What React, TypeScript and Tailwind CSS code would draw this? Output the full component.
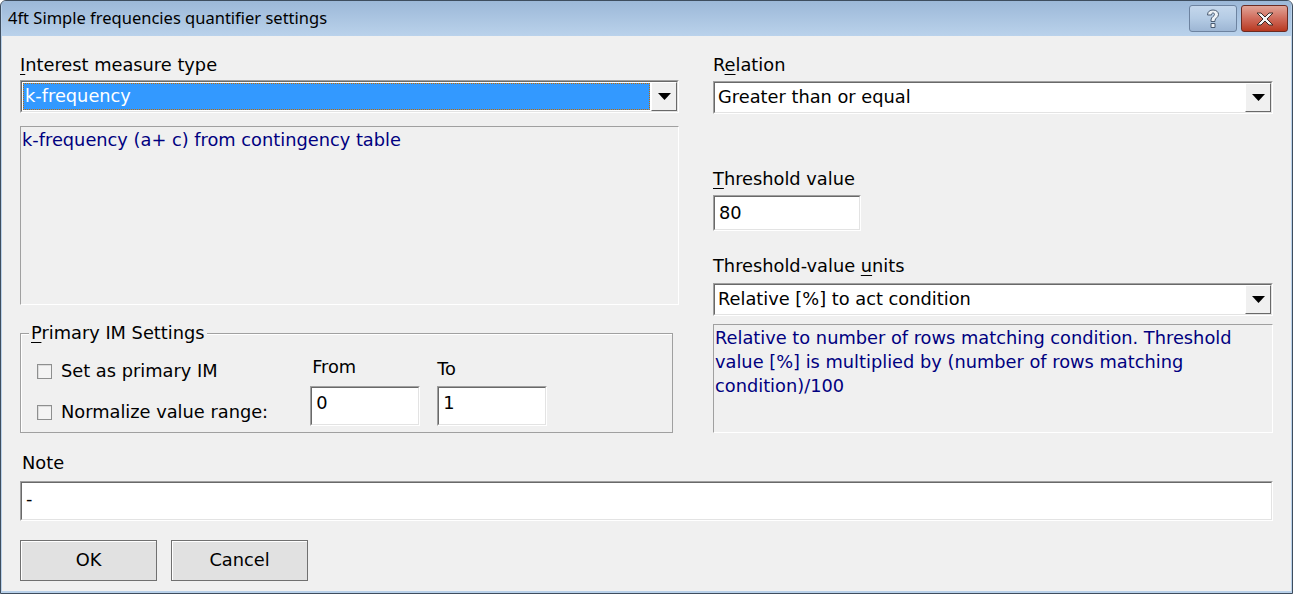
import React from "react";

const ui = { fontFamily: '"DejaVu Sans", Tahoma, sans-serif' };

const DropButton = () => (
  <div className="flex h-full w-[26px] shrink-0 items-center justify-center border border-t-white border-l-white border-b-[#696969] border-r-[#696969] bg-[#f0f0f0]">
    <svg width="13" height="7" viewBox="0 0 13 7">
      <path d="M0 0 H13 L6.5 7 Z" fill="#000" />
    </svg>
  </div>
);

const Sunken = ({ className, children }: { className?: string; children?: React.ReactNode }) => (
  <div className={"border border-t-[#a0a0a0] border-l-[#a0a0a0] border-b-white border-r-white " + (className || "")}>
    <div className="h-full w-full border border-t-[#696969] border-l-[#696969] border-b-[#e3e3e3] border-r-[#e3e3e3] bg-white">
      {children}
    </div>
  </div>
);

const Combo = ({ value, selected }: { value: string; selected?: boolean }) => (
  <Sunken className="h-[33px]">
    <div className="flex h-full items-stretch">
      <div className="flex flex-1 items-center p-[1px]">
        {selected ? (
          <div className="flex h-full w-full items-center border border-dotted border-[#c46a00] bg-[#3399ff] pl-[1px] text-white">
            {value}
          </div>
        ) : (
          <div className="pl-[2px]">{value}</div>
        )}
      </div>
      <DropButton />
    </div>
  </Sunken>
);

const Label = ({ pre, u, post, className }: { pre?: string; u?: string; post?: string; className?: string }) => (
  <div className={"h-[22px] leading-[22px] " + (className || "")}>
    {pre}
    {u && <span className="underline underline-offset-[3px]">{u}</span>}
    {post}
  </div>
);

const Desc = ({ className, children }: { className?: string; children: React.ReactNode }) => (
  <div className={"border border-t-[#a0a0a0] border-l-[#a0a0a0] border-b-white border-r-white bg-[#f0f0f0] px-[1px] pt-[1px] leading-[24px] text-[#000080] " + (className || "")}>
    {children}
  </div>
);

const Check = ({ label }: { label: string }) => (
  <div className="flex items-center gap-[9px]">
    <div className="h-[15px] w-[15px] border border-[#8e8f8f] bg-[#f4f4f4] shadow-[inset_1px_1px_0_#dcdcdc]" />
    <span>{label}</span>
  </div>
);

export default function App() {
  return (
    <div className="flex h-[594px] w-[1293px] flex-col overflow-hidden rounded-t-[6px] border border-[#3e4d5e] bg-[#b9d1ea] px-[1px] pb-[2px]">
      {/* title bar */}
      <div className="flex h-[35px] shrink-0 items-start bg-gradient-to-b from-[#9cb8d8] to-[#bad2eb]">
        <div
          className="pl-[6px] pt-[5px] text-[16.5px] text-black"
          style={{ fontFamily: '"Noto Sans", "Open Sans", sans-serif' }}
        >
          4ft Simple frequencies quantifier settings
        </div>
        <div className="ml-auto mr-[3px] mt-[4px] flex gap-[4px]">
          <div className="flex h-[27px] w-[48px] items-center justify-center rounded-[3px] border border-[#6d83a0] bg-gradient-to-b from-[#c4d7ec] via-[#b4cbe4] to-[#9db6d4]">
            <svg width="14" height="20" viewBox="0 0 14 20">
              <path
                d="M1.5 6 C1.5 2.5 4 1 7 1 C10.5 1 12.5 3 12.5 5.5 C12.5 8.5 9 9 9 11.5 L9 12.5 L5 12.5 L5 11 C5 7.5 8.5 7.5 8.5 5.5 C8.5 4.5 8 4 7 4 C6 4 5.5 4.8 5.5 6 Z M5 14.5 L9 14.5 L9 18.5 L5 18.5 Z"
                fill="#eef2f6"
                stroke="#4a5b70"
                strokeWidth="1"
                strokeLinejoin="round"
              />
            </svg>
          </div>
          <div className="flex h-[27px] w-[47px] items-center justify-center rounded-[3px] border border-[#6b2b22] bg-gradient-to-b from-[#e0a497] via-[#cf6b5b] to-[#b8381f]">
            <svg width="20" height="16" viewBox="0 0 20 16">
              <path
                d="M2 2 L6 2 L10 6 L14 2 L18 2 L12 8 L18 14 L14 14 L10 10 L6 14 L2 14 L8 8 Z"
                fill="#f4f4f4"
                stroke="#3b2a26"
                strokeWidth="1"
                strokeLinejoin="round"
              />
            </svg>
          </div>
        </div>
      </div>

      {/* client */}
      <div className="flex flex-1 flex-col bg-[#f0f0f0] pl-[18px] pr-[18px] pt-[18px] text-[17.8px] text-black" style={ui}>
        <div className="flex gap-[34px]">
          {/* left column */}
          <div className="flex w-[659px] flex-col">
            <Label u="I" post="nterest measure type" />
            <div className="mt-[4px]">
              <Combo value="k-frequency" selected />
            </div>
            <Desc className="mt-[13px] h-[179px]">k-frequency (a+ c) from contingency table</Desc>

            <div className="relative mt-[28px] h-[100px] w-[653px] border border-[#a0a0a0] shadow-[inset_1px_1px_0_#fff]">
              <div className="absolute left-[8px] top-[-12px] bg-[#f0f0f0] px-[2px] leading-[22px]">
                <span className="underline underline-offset-[3px]">P</span>rimary IM Settings
              </div>
              <div className="flex pl-[16px] pt-[22px]">
                <div className="flex flex-col gap-[14px] pt-[2px]">
                  <Check label="Set as primary IM" />
                  <Check label="Normalize value range:" />
                </div>
                <div className="ml-[42px] flex flex-col">
                  <div className="h-[30px] pl-[2px] pt-[1px] leading-[20px]">From</div>
                  <Sunken className="h-[40px] w-[110px]">
                    <div className="pl-[4px] pt-[2px]">0</div>
                  </Sunken>
                </div>
                <div className="ml-[17px] flex flex-col">
                  <div className="h-[30px] pt-[3px] leading-[20px]">To</div>
                  <Sunken className="h-[40px] w-[110px]">
                    <div className="pl-[4px] pt-[2px]">1</div>
                  </Sunken>
                </div>
              </div>
            </div>
          </div>

          {/* right column */}
          <div className="flex w-[560px] flex-col">
            <Label pre="R" u="e" post="lation" />
            <div className="mt-[5px]">
              <Combo value="Greater than or equal" />
            </div>
            <Label u="T" post="hreshold value" className="mt-[54px]" />
            <Sunken className="mt-[5px] h-[36px] w-[148px]">
              <div className="pl-[4px] pt-[3px]">80</div>
            </Sunken>
            <Label pre="Threshold-value " u="u" post="nits" className="mt-[24px]" />
            <div className="mt-[6px]">
              <Combo value="Relative [%] to act condition" />
            </div>
            <Desc className="mt-[8px] h-[109px]">
              Relative to number of rows matching condition. Threshold value [%] is multiplied by (number of rows matching
              condition)/100
            </Desc>
          </div>
        </div>

        <Label pre="Note" className="mt-[19px] pl-[2px]" />
        <Sunken className="mt-[7px] h-[40px] w-[1253px]">
          <div className="pl-[4px] pt-[3px]">-</div>
        </Sunken>

        <div className="mt-[19px] flex gap-[14px]">
          <button className="h-[41px] w-[137px] border border-[#707070] bg-[#e1e1e1] shadow-[inset_1px_1px_0_#fff]">OK</button>
          <button className="h-[41px] w-[137px] border border-[#707070] bg-[#e1e1e1] shadow-[inset_1px_1px_0_#fff]">Cancel</button>
        </div>
      </div>
    </div>
  );
}
